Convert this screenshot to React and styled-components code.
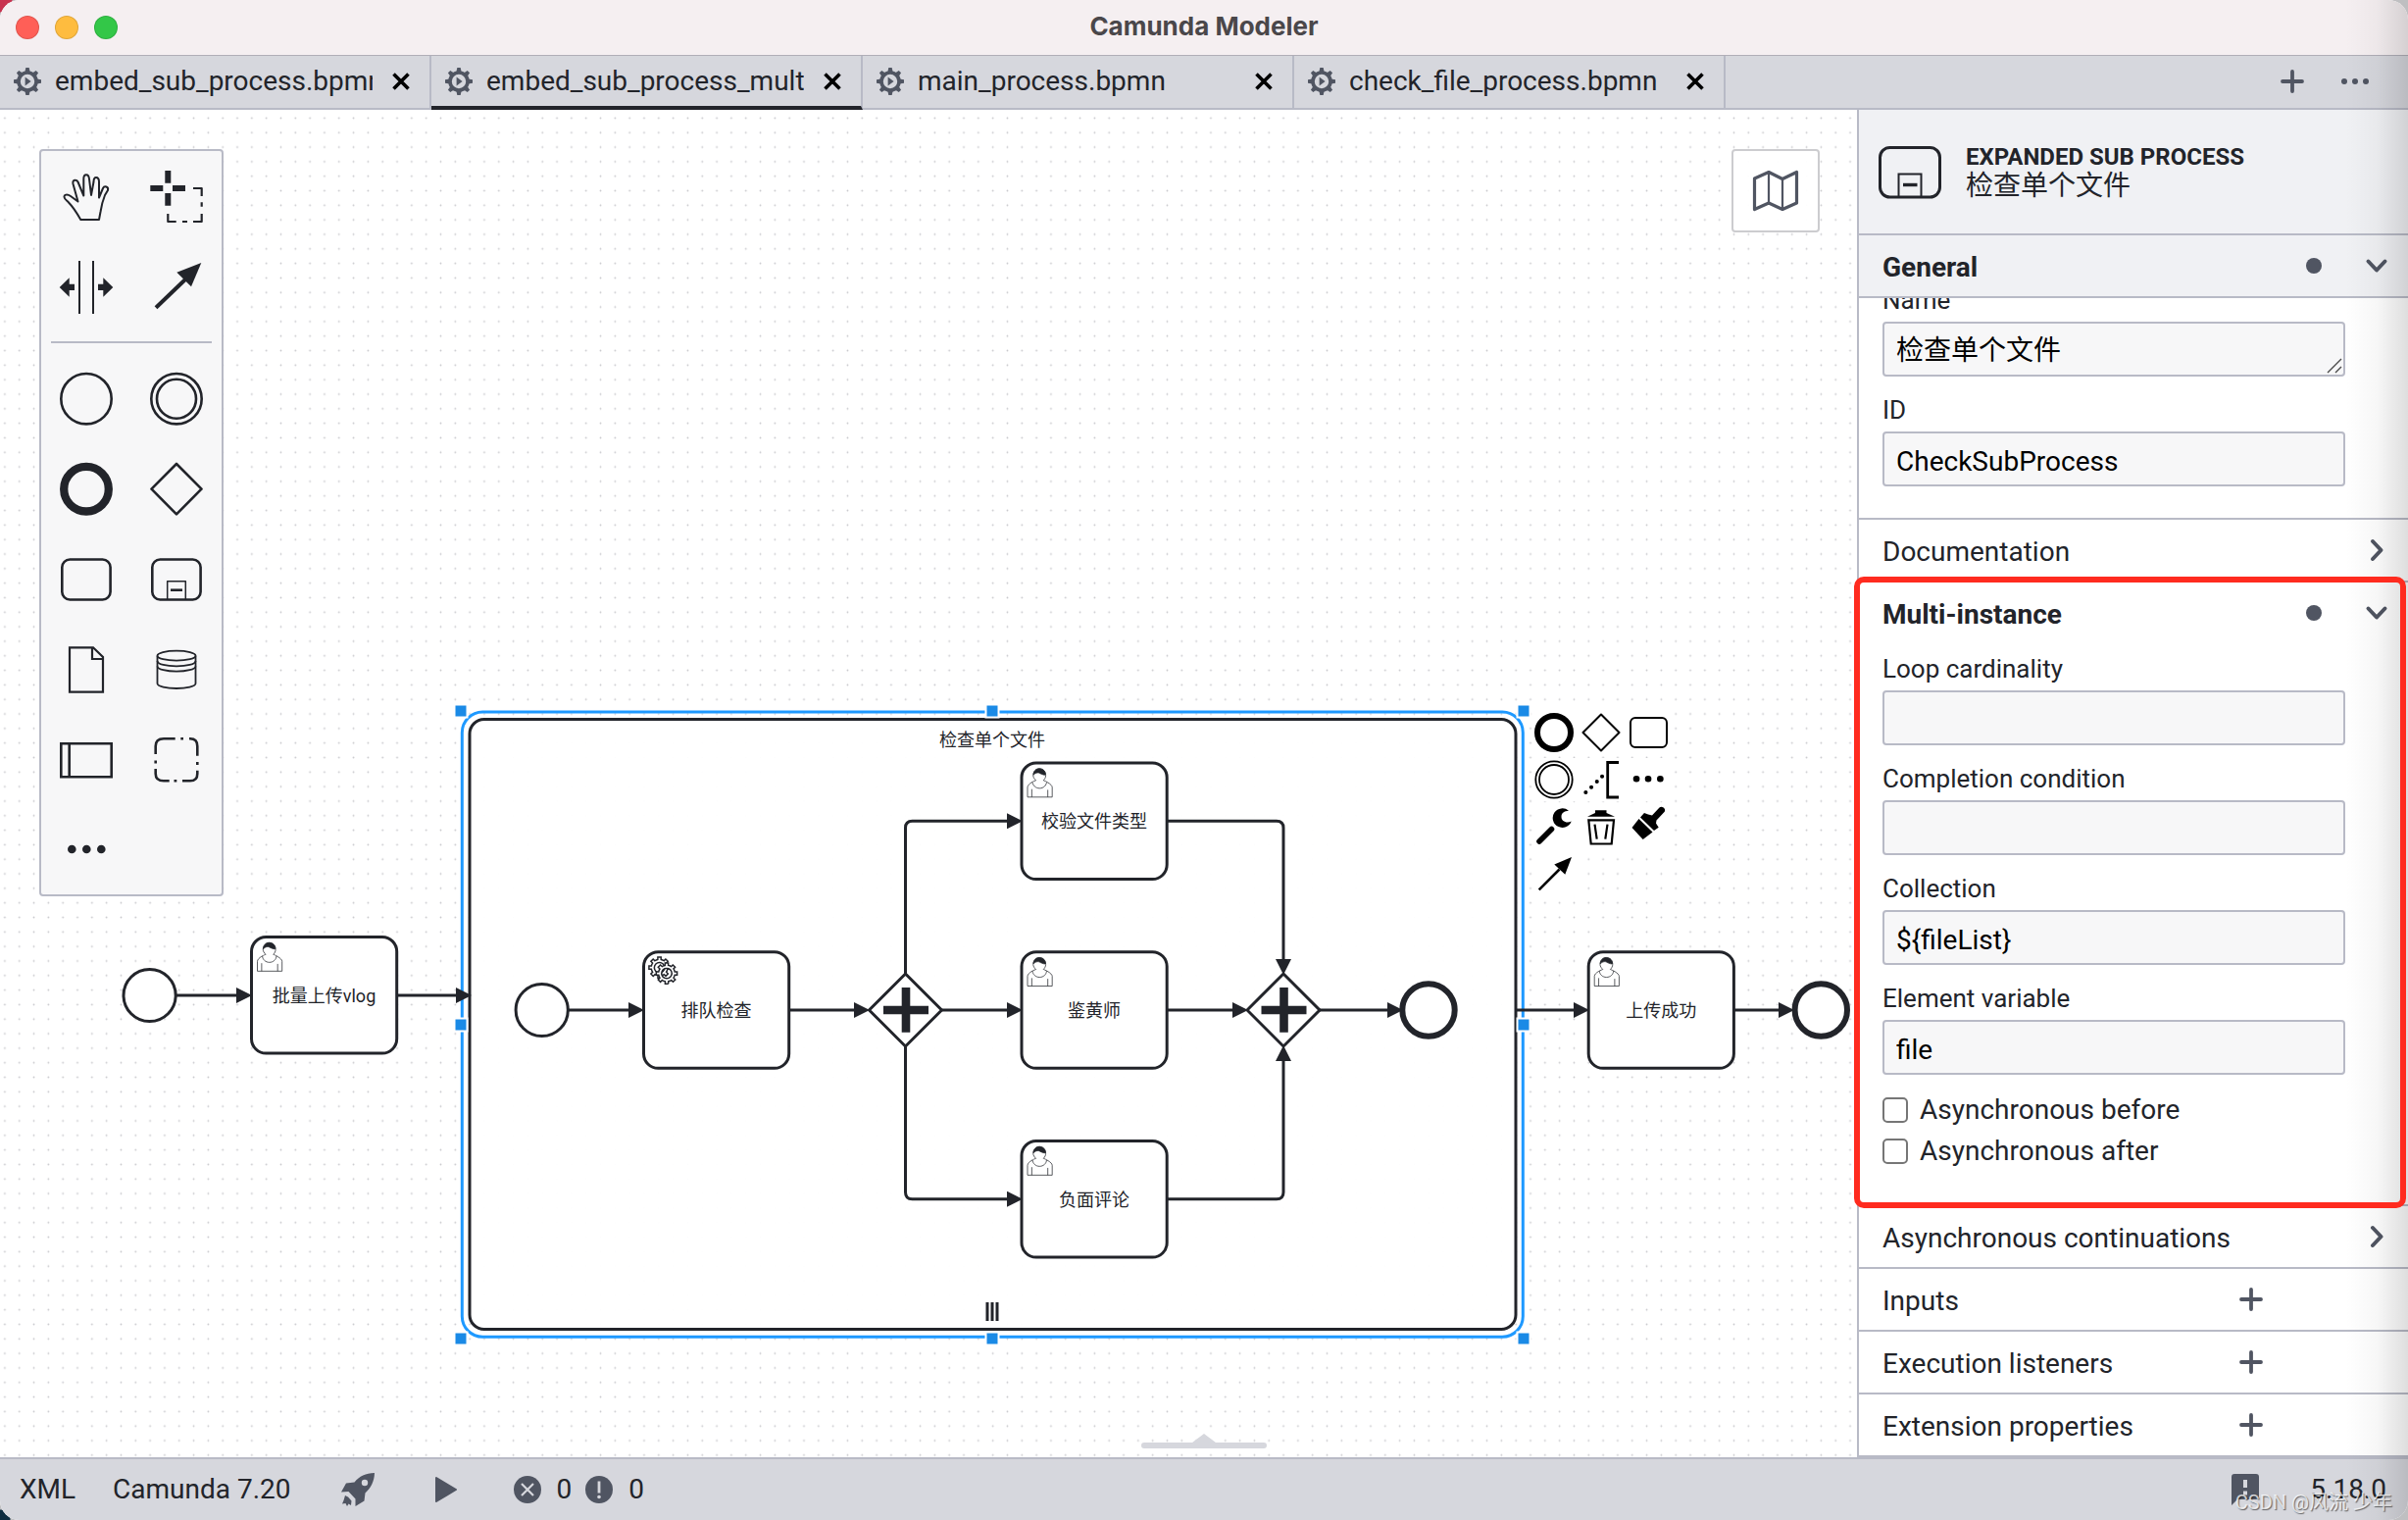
import { useState } from 'react';
import styled, { createGlobalStyle, css } from 'styled-components';

const GlobalStyle = createGlobalStyle`
  * {
    box-sizing: border-box;
  }

  body {
    margin: 0;
    background:
      radial-gradient(circle at 0 0, #c8324f 0 12px, transparent 13px),
      radial-gradient(circle at 0 100%, #0d2c40 0 10px, transparent 11px),
      #bfbfc1;
    color: #22242a;
    font-family: Roboto, 'Noto Sans CJK SC', sans-serif;
    font-size: 28px;
  }

  button,
  input,
  textarea {
    font-family: inherit;
    font-size: inherit;
    color: inherit;
  }
`;

const Window = styled.div`
  position: relative;
  display: flex;
  flex-direction: column;
  min-height: 100vh;
  border-radius: 20px;
  overflow: hidden;
  background: #fff;
`;

const EdgeShade = styled.div`
  position: absolute;
  top: 0;
  right: 0;
  bottom: 0;
  width: 64px;
  pointer-events: none;
  background: linear-gradient(to right, transparent, rgba(0, 0, 0, 0.03) 50%, rgba(0, 0, 0, 0.13));
`;

const TitleBar = styled.header`
  display: grid;
  grid-template-columns: 1fr auto 1fr;
  align-items: center;
  height: 57px;
  padding: 0 16px;
  background: #f5eff1;
  border-bottom: 1px solid #b0aeb7;
`;

const TrafficLights = styled.div`
  display: flex;
  gap: 16px;
`;

const Light = styled.button`
  width: 24px;
  height: 24px;
  padding: 0;
  border: 1px solid rgba(0, 0, 0, 0.12);
  border-radius: 50%;
  background: ${props => props.$color};
`;

const WindowTitle = styled.h1`
  margin: 0;
  padding-bottom: 2px;
  font-family: Inter, sans-serif;
  font-size: 26px;
  font-weight: 700;
  line-height: 32px;
  color: #4a474a;
`;

const TabBar = styled.nav`
  display: flex;
  height: 55px;
  background: #d6d7dd;
  border-bottom: 2px solid #b8bac6;
`;

const Tab = styled.div`
  display: flex;
  align-items: center;
  flex: 0 1 440px;
  min-width: 0;
  height: ${props => (props.$active ? '55px' : '53px')};
  padding: 0 20px ${props => (props.$active ? '0' : '2px')} 14px;
  border-right: 2px solid #b8bac6;
  border-bottom: ${props => (props.$active ? '4px solid #22242a' : 'none')};
`;

const TabName = styled.span`
  flex: 1;
  margin: 0 20px 0 14px;
  overflow: hidden;
  white-space: nowrap;
  line-height: 36px;
`;

const IconButton = styled.button`
  display: flex;
  align-items: center;
  justify-content: center;
  padding: 0;
  border: none;
  background: none;
  color: ${props => props.$color || '#505562'};
  cursor: pointer;
`;

const TabActions = styled.div`
  display: flex;
  align-items: center;
  gap: 38px;
  margin-left: auto;
  padding: 0 40px 2px 0;
`;

const Main = styled.main`
  position: relative;
  display: flex;
  flex: 1;
`;

const Canvas = styled.section`
  position: relative;
  flex: 1;
  min-width: 0;
  overflow: hidden;
`;

const DiagramSvg = styled.svg`
  position: absolute;
  inset: 0;
  width: 100%;
  height: 100%;

  text {
    font-size: 18px;
    text-anchor: middle;
    fill: #22242a;
  }
`;

const Palette = styled.div`
  position: absolute;
  top: 40px;
  left: 40px;
  display: grid;
  grid-template-columns: 92px 92px;
  background: #f7f7f8;
  border: 2px solid #b8bac6;
  border-radius: 4px;
`;

const PaletteEntry = styled.button`
  width: 92px;
  height: 92px;
  padding: 0;
  border: none;
  background: none;
  color: #22242a;
  cursor: pointer;

  svg {
    display: block;
  }
`;

const Separator = styled.hr`
  grid-column: 1 / -1;
  width: 164px;
  height: 2px;
  margin: 10px auto;
  border: none;
  background: #b8bac6;
`;

const ContextPad = styled.div`
  position: absolute;
  top: 613px;
  left: 1563px;
  display: grid;
  grid-template-columns: repeat(3, 44px);
  gap: 4px;
`;

const PadEntry = styled.button`
  width: 44px;
  height: 44px;
  padding: 0;
  border: none;
  background: #fff;
  color: #000;
  cursor: pointer;

  svg {
    display: block;
  }
`;

const MinimapToggle = styled.button`
  position: absolute;
  top: 40px;
  right: 38px;
  display: flex;
  align-items: center;
  justify-content: center;
  width: 90px;
  height: 85px;
  padding: 0;
  border: 2px solid #cccccf;
  border-radius: 4px;
  background: rgba(255, 255, 255, 0.95);
  color: #505562;
`;

const LogHandle = styled.svg`
  position: absolute;
  bottom: 8px;
  left: calc(50% - 64px);
`;

const Properties = styled.aside`
  flex: 0 0 562px;
  border-left: 2px solid #b8bac6;
  background: #fff;
`;

const PanelHeader = styled.div`
  display: flex;
  align-items: center;
  gap: 24px;
  height: 128px;
  padding: 2px 20px 0 20px;
  background: #f0f1f4;
  border-bottom: 2px solid #b8bac6;
`;

const ElementType = styled.div`
  font-size: 24px;
  font-weight: 700;
  line-height: 28px;
  text-transform: uppercase;
`;

const ElementName = styled.div`
  line-height: 32px;
`;

const Group = styled.section`
  position: relative;
  border-bottom: 2px solid #b8bac6;

  ${props => props.$marked && css`
    &::after {
      content: '';
      position: absolute;
      z-index: 1;
      inset: -6px 2px -4px -5px;
      border: 6px solid #ff2b1f;
      border-radius: 10px;
      pointer-events: none;
    }
  `}
`;

const GroupHeader = styled.div`
  display: flex;
  align-items: center;
  height: ${props => (props.$sticky ? '64px' : '62px')};
  padding: 0 20px 0 24px;
  background: ${props => (props.$sticky ? '#f0f1f4' : 'transparent')};
  border-bottom: ${props => (props.$sticky ? '2px solid #b8bac6' : 'none')};
`;

const GroupTitle = styled.h2`
  flex: 1;
  margin: 0;
  padding-top: 4px;
  font-size: 28px;
  font-weight: ${props => (props.$open ? 700 : 400)};
  line-height: 36px;
`;

const DataDot = styled.span`
  width: 16px;
  height: 16px;
  margin-right: 44px;
  border-radius: 50%;
  background: #505562;
`;

const AddSlot = styled.div`
  margin-right: 128px;
`;

const GroupBody = styled.div`
  overflow: hidden;
  padding: 0 64px 32px 24px;
`;

const Fields = styled.div`
  display: flex;
  flex-direction: column;
  gap: 18px;
  margin-top: ${props => (props.$scrolled ? '-14px' : '10px')};
`;

const Field = styled.div`
  position: relative;
  display: flex;
  flex-direction: column;
  gap: 6px;
`;

const FieldLabel = styled.label`
  font-size: 26px;
  line-height: 32px;
`;

const boxStyle = css`
  display: block;
  width: 100%;
  height: 56px;
  padding: 10px 12px 6px;
  border: 2px solid #b8bac6;
  border-radius: 4px;
  background: #f7f7f8;
  color: #000;
  line-height: 36px;
  outline: none;
`;

const TextInput = styled.input`
  ${boxStyle}
`;

const TextArea = styled.textarea`
  ${boxStyle}
  overflow: hidden;
  resize: vertical;

  &::-webkit-resizer {
    background: transparent;
  }
`;

const Grip = styled.svg`
  position: absolute;
  right: 3px;
  bottom: 3px;
  pointer-events: none;
`;

const CheckList = styled.div`
  margin-top: 15px;
  padding-bottom: 1px;
`;

const CheckRow = styled.div`
  display: flex;
  align-items: center;
  gap: 12px;
  height: 42px;
`;

const Checkbox = styled.input`
  appearance: none;
  width: 26px;
  height: 26px;
  margin: 0;
  border: 2px solid #767676;
  border-radius: 5px;
  background: #fff;
`;

const CheckLabel = styled.label`
  line-height: 36px;
`;

const StatusBar = styled.footer`
  display: flex;
  align-items: center;
  height: 64px;
  padding: 0 20px;
  background: #d6d7dd;
  border-top: 2px solid #b8bac6;
`;

const StatusButton = styled.button`
  display: flex;
  align-items: center;
  gap: 16px;
  margin-right: ${props => props.$gap}px;
  padding: 0;
  border: none;
  background: none;
  line-height: 36px;
  cursor: pointer;

  svg {
    color: #505562;
  }
`;

const StatusRight = styled.div`
  display: flex;
  align-items: center;
  margin-left: auto;
`;

const Watermark = styled.span`
  position: absolute;
  right: 16px;
  bottom: 6px;
  font-size: 20px;
  line-height: 24px;
  color: rgba(255, 255, 255, 0.75);
  text-shadow: 1px 1px 1px rgba(0, 0, 0, 0.55);
  white-space: nowrap;
`;

const INK = '#22242a';

const TEETH = [0, 45, 90, 135, 180, 225, 270, 315];

const GearIcon = () => (
  <svg width="28" height="28" viewBox="-14 -14 28 28" fill="#505562">
    <circle r="9" fill="none" stroke="#505562" strokeWidth="3.6" />
    {TEETH.map(angle => (
      <path key={angle} d="M-2.6 -9.5L-1.7 -14H1.7L2.6 -9.5Z" transform={`rotate(${angle})`} />
    ))}
    <path d="M-2.4 -4.6L3.6 0L-2.4 4.6Z" />
  </svg>
);

const CloseIcon = () => (
  <svg width="18" height="18" viewBox="-9 -9 18 18" stroke="currentColor" strokeWidth="3.6">
    <path d="M-7.5 -7.5L7.5 7.5M7.5 -7.5L-7.5 7.5" />
  </svg>
);

const PlusIcon = () => (
  <svg width="24" height="24" viewBox="-12 -12 24 24" stroke="currentColor" strokeWidth="3.8" strokeLinecap="round">
    <path d="M-10 0H10M0 -10V10" />
  </svg>
);

const DotsIcon = () => (
  <svg width="28" height="8" viewBox="-14 -4 28 8" fill="currentColor">
    <circle cx="-11" r="3" />
    <circle cx="0" r="3" />
    <circle cx="11" r="3" />
  </svg>
);

const Chevron = ({ open }) => (
  <svg width="24" height="24" viewBox="-12 -12 24 24" fill="none" stroke="currentColor" strokeWidth="4" strokeLinecap="round" strokeLinejoin="round">
    <path d={open ? 'M-8.5 -4.5L0 4.5L8.5 -4.5' : 'M-4 -9L4.5 0L-4 9'} />
  </svg>
);

const SubProcessIcon = () => (
  <svg width="65" height="54" viewBox="0 0 65 54" fill="none" stroke={INK}>
    <rect x="1.5" y="1.5" width="61" height="50.5" rx="10" strokeWidth="3" />
    <path d="M20.5 52V28.5H43.5V52" strokeWidth="2" />
    <path d="M25 39.5H39.5" strokeWidth="3.4" />
  </svg>
);

const MapIcon = () => (
  <svg width="48" height="44" viewBox="-24 -22 48 44" fill="none" stroke="currentColor" strokeWidth="3.2" strokeLinejoin="round">
    <path d="M-21.5 -13L-7 -19.5L7 -12.5L21.5 -19.5V12L7 18.5L-7 12L-21.5 18.5Z" />
    <path d="M-7 -19V12M7 -12.5V18.5" strokeWidth="2.2" />
  </svg>
);

const RocketIcon = () => (
  <svg width="36" height="36" viewBox="0 0 36 36" fill="currentColor">
    <path fillRule="evenodd" d="M35 1C26 1 19.5 4.5 14.5 10.5L6 11.5L1 20.5L8.5 20L15.5 27.5L15.5 35L24.500 29.5L25.5 21.5C31 16.5 34.8 10 35 1ZM25 7.8A3.2 3.2 0 1 1 25 14.2A3.2 3.2 0 1 1 25 7.8Z" />
    <path d="M5 24L8 25.5L11.5 29.5L11 34L8.5 32.5L7 35L5.5 32L2 32.5L3.5 29Z" />
  </svg>
);

const PlayIcon = () => (
  <svg width="24" height="28" viewBox="0 0 24 28" fill="currentColor" stroke="currentColor" strokeWidth="2" strokeLinejoin="round">
    <path d="M2 2L22 14L2 26Z" />
  </svg>
);

const ErrorIcon = () => (
  <svg width="28" height="28" viewBox="-14 -14 28 28">
    <circle r="14" fill="currentColor" />
    <path d="M-6 -6L6 6M6 -6L-6 6" stroke="#d6d7dd" strokeWidth="2.2" />
  </svg>
);

const WarningIcon = () => (
  <svg width="28" height="28" viewBox="-14 -14 28 28">
    <circle r="14" fill="currentColor" />
    <path d="M0 -8.5V3.5" stroke="#d6d7dd" strokeWidth="2.8" />
    <circle cy="7.5" r="1.8" fill="#d6d7dd" />
  </svg>
);

const FeedbackIcon = () => (
  <svg width="28" height="32" viewBox="0 0 28 32">
    <path d="M3 0H25A3 3 0 0 1 28 3V23A3 3 0 0 1 25 26H6L0 32V3A3 3 0 0 1 3 0Z" fill="currentColor" />
    <path d="M14 6V14M14 17.5V21.5" stroke="#d6d7dd" strokeWidth="4" />
  </svg>
);

const PALETTE = [
  { name: 'Hand tool', icon: <path strokeWidth="2" d="M-5.7 24H13L14.5 16C15.5 9 17 4 19 -1L22 -6C23 -9.5 18.5 -11 17 -8L13 1.5V-14.5C13 -17.5 12.5 -19 10 -19C8 -19 7.5 -16.5 7.5 -14.5L5 -1L3 -17.5C2.7 -20.5 1.5 -21.8 0 -21.8C-1.5 -21.8 -2.7 -20.5 -2.7 -17.5V-.5L-8.5 -14.5C-9.7 -17 -14.5 -17.5 -13.5 -12.5L-8.5 5.5L-16 0C-19 -2 -23 -2 -22.5 1C-22.3 3 -20 4.5 -18 6.5C-13 11.5 -10 16.5 -5.7 24Z" /> },
  {
    name: 'Lasso tool',
    icon: (
      <>
        <path strokeWidth="6" d="M-8.7 -26V-13.3M-8.7 -3V9.7M-26.7 -8H-13.7M-4 -8H9" />
        <path strokeWidth="2.2" d="M17 -8H25.7V0M25.7 6.3V10.7M25.7 18V26H17M11 26H6M-.3 26H-8.7V18" />
      </>
    ),
  },
  {
    name: 'Space tool',
    icon: (
      <>
        <path strokeWidth="2" d="M-7 -26V28M7 -26V28" />
        <path stroke="none" fill="currentColor" d="M-27.3 1L-17.3 -8.7V-2.3H-12V4H-17.3V10.7ZM27.3 1L17.3 -8.7V-2.3H12V4H17.3V10.7Z" />
      </>
    ),
  },
  {
    name: 'Connect tool',
    icon: (
      <>
        <path strokeWidth="4" d="M-21 21.7L9 -7" />
        <path stroke="none" fill="currentColor" d="M25.3 -24L.3 -14.3L15 .3Z" />
      </>
    ),
  },
  null,
  { name: 'Start event', icon: <circle r="25.7" cy=".7" /> },
  {
    name: 'Intermediate event',
    icon: (
      <>
        <circle r="25.7" cy=".7" />
        <circle r="20" cy=".7" />
      </>
    ),
  },
  { name: 'End event', icon: <circle r="22.8" cy=".7" strokeWidth="8.3" /> },
  { name: 'Gateway', icon: <path d="M0 -25L25.5 .7L0 26.3L-25.5 .7Z" /> },
  { name: 'Task', icon: <rect x="-24.7" y="-19.5" width="49.3" height="41" rx="8" /> },
  {
    name: 'Expanded sub-process',
    icon: (
      <>
        <rect x="-24.7" y="-19.5" width="49.3" height="41" rx="8" />
        <path strokeWidth="1.5" d="M-9.3 21V2.8H9.3V21" />
        <path d="M-6 11.7H6" />
      </>
    ),
  },
  { name: 'Data object', icon: <path strokeWidth="2.2" strokeLinejoin="miter" d="M-17 -21.7H7L17 -12V23.7H-17ZM6 -21.7V-10H17" /> },
  {
    name: 'Data store',
    icon: (
      <g strokeWidth="1.8">
        <ellipse cy="-13.3" rx="19.5" ry="5" />
        <path d="M-19.5 -13.3V15C-19.5 18 -10 20 0 20S19.5 18 19.5 15V-13.3" />
        <path d="M-19.5 -8C-19.5 -4.5 -10 -2.7 0 -2.7S19.5 -4.5 19.5 -8M-19.5 -2.5C-19.5 .5 -10 2.7 0 2.7S19.5 .5 19.5 -2.5" />
      </g>
    ),
  },
  { name: 'Participant', icon: <path strokeLinejoin="miter" d="M-25.7 -15.7H25.7V18.3H-25.7ZM-17.3 -15.7V18.3" /> },
  {
    name: 'Group',
    icon: (
      <path d="M-21.3 -5V-13Q-21.3 -20.7 -13 -20.7H-1.3M4.3 -20.7H7M13 -20.7H14Q21.3 -20.7 21.3 -13V-3.3M21.3 3V6M21.3 11.7V15Q21.3 22.3 14 22.3H6M.3 22.3H-2.5M-7.3 22.3H-13Q-21.3 22.3 -21.3 15V10M-21.3 1.5V4.5" />
    ),
  },
  {
    name: 'Create element',
    icon: (
      <g stroke="none" fill="currentColor">
        <circle cx="-14.7" r="4.3" />
        <circle cx=".3" r="4.3" />
        <circle cx="15.3" r="4.3" />
      </g>
    ),
  },
];

const PAD = [
  { name: 'Append end event', icon: <circle r="17" strokeWidth="6" /> },
  { name: 'Append gateway', icon: <path d="M0 -18.5L18.5 0L0 18.5L-18.5 0Z" /> },
  { name: 'Append task', icon: <rect x="-18" y="-15" width="37" height="30" rx="5" /> },
  {
    name: 'Append intermediate event',
    icon: (
      <>
        <circle r="18.7" strokeWidth="1.8" />
        <circle r="15" strokeWidth="1.8" />
      </>
    ),
  },
  {
    name: 'Add text annotation',
    icon: (
      <>
        <path strokeWidth="2.8" strokeLinejoin="miter" d="M18 -17.5H6.7V18H18" />
        <path strokeWidth="4" strokeLinecap="round" d="M-15.7 13h.1M-10 7.7h.1M-4.3 2h.1M1 -3.3h.1" />
      </>
    ),
  },
  { name: 'Append element', icon: <path strokeWidth="6.6" strokeLinecap="round" d="M-12 -.7h.1M0 -.7h.1M12.3 -.7h.1" /> },
  {
    name: 'Change element',
    icon: (
      <>
        <path strokeWidth="5.6" strokeLinecap="round" d="M-15 15L-2.5 2.5" />
        <path stroke="none" fill="currentColor" d="M15 -16.2A9.8 9.8 0 1 0 17.7 -5.5C13 -3 7.5 -5.5 7.5 -10C7.5 -14 10.5 -16 15 -16.2Z" />
      </>
    ),
  },
  {
    name: 'Delete',
    icon: (
      <>
        <path stroke="none" fill="currentColor" d="M-14 -10.3L-6 -14V-16.7H5.5V-14L14 -10.3Z" />
        <path strokeWidth="2.2" strokeLinejoin="miter" d="M-12.7 -6.7H13L10.7 17.5H-10.3ZM-6.5 -2.3L-4.3 12.7M6.5 -2.3L4.3 12.7" />
      </>
    ),
  },
  {
    name: 'Set color',
    icon: (
      <g stroke="none" fill="currentColor">
        <path d="M-9.5 -8L4.5 5.5L-5.3 13L-16.5 1Z" />
        <path d="M-8 -9.5L-4 -14L0 -12.5L4 -11.5L11.5 -19.5C14 -22 19 -18 16.5 -15L8.5 -6.5L8 -3.5L10.7 .7L6 4Z" />
      </g>
    ),
  },
  {
    name: 'Connect',
    icon: (
      <>
        <path strokeWidth="2.6" d="M-15.3 16.3L5.5 -4.5" />
        <path stroke="none" fill="currentColor" d="M18 -17L.3 -9.5L11.3 .7Z" />
      </>
    ),
  },
];

const GEAR_PATH = 'v -1.71335 c 0.352326,-0.0705 0.703932,-0.17838 1.047628,-0.32133 0.344416,-0.14465 0.665822,-0.32133 0.966377,-0.52145 l 1.19431,1.18005 1.567487,-1.57688 -1.195028,-1.18014 c 0.403376,-0.61394 0.683079,-1.29908 0.825447,-2.01824 l 1.622133,-0.01 v -2.2196 l -1.636514,0.01 c -0.07333,-0.35153 -0.178319,-0.70024 -0.323564,-1.04372 -0.145244,-0.34406 -0.321407,-0.6644 -0.522735,-0.96217 l 1.131035,-1.13631 -1.583305,-1.56293 -1.129598,1.13589 c -0.614052,-0.40108 -1.302883,-0.68093 -2.022633,-0.82247 l 0.0093,-1.61852 h -2.241173 l 0.0042,1.63124 c -0.353763,0.0736 -0.705369,0.17977 -1.049785,0.32371 -0.344415,0.14437 -0.665102,0.32092 -0.9635006,0.52046 l -1.1698628,-1.15823 -1.5667691,1.5792 1.1684265,1.15669 c -0.4026573,0.61283 -0.68308,1.29797 -0.8247287,2.01713 l -1.6588041,0.003 v 2.22174 l 1.6724648,-0.006 c 0.073327,0.35077 0.1797598,0.70243 0.3242851,1.04472 0.1452428,0.34448 0.3214064,0.6644 0.5227339,0.96066 l -1.1993431,1.19723 1.5840256,1.56011 1.1964668,-1.19348 c 0.6140517,0.40346 1.3028827,0.68232 2.0233517,0.82331 l 7.19e-4,1.69892 h 2.226848 z m 0.221462,-3.9957 c -1.788948,0.7502 -3.8576,-0.0928 -4.6097055,-1.87438 -0.7521065,-1.78321 0.090598,-3.84627 1.8802645,-4.59604 1.78823,-0.74936 3.856881,0.0929 4.608987,1.87437 0.752106,1.78165 -0.0906,3.84612 -1.879546,4.59605 z';

const UserMarker = () => (
  <g stroke={INK} strokeWidth=".5" fill="#fff">
    <path d="m 15,12 c 0.909,-0.845 1.594,-2.049 1.594,-3.385 0,-2.554 -1.805,-4.622 -4.357,-4.622 -2.552,0 -4.288,2.068 -4.288,4.622 0,1.348 0.974,2.562 1.896,3.405 -0.529,0.187 -5.669,2.097 -5.794,4.756 v 6.718 h 17 v -6.718 c 0,-2.298 -5.528,-4.595 -6.051,-4.776 z m -8,6 l 0,5.5 m 11,0 l 0,-5" />
    <path d="m 17.162,13.009 c 0,2.447 -2.158,4.431 -4.821,4.431 -2.665,0 -4.822,-1.981 -4.822,-4.431" />
    <path fill={INK} d="m 8.1,8.2 c 0,0 2.251,-2.358 4.274,-1.177 2.024,1.181 4.221,1.537 4.124,0.965 -0.098,-0.57 -0.117,-3.791 -4.191,-4.136 -3.572,0.001 -4.208,3.42 -4.207,4.348 z" />
  </g>
);

const ServiceMarker = () => (
  <g stroke={INK} strokeWidth="1" fill="#fff">
    <path d={`m 12,18 ${GEAR_PATH}`} />
    <path d={`m 17,22 ${GEAR_PATH}`} />
  </g>
);

const TASKS = [
  { label: '批量上传vlog', x: 256.5, y: 955.5, type: 'user' },
  { label: '排队检查', x: 656.5, y: 970.7, type: 'service' },
  { label: '校验文件类型', x: 1042, y: 778, type: 'user' },
  { label: '鉴黄师', x: 1042, y: 970.7, type: 'user' },
  { label: '负面评论', x: 1042, y: 1163.5, type: 'user' },
  { label: '上传成功', x: 1620.2, y: 970.7, type: 'user' },
];

const FLOWS = [
  'M180 1015H250',
  'M580 1030H650',
  'M805 1030H880',
  'M923.5 993V844.3Q923.5 837.3 930.5 837.3H1036',
  'M960.5 1030H1036',
  'M923.5 1067V1215.7Q923.5 1222.7 930.5 1222.7H1036',
  'M1190.5 837.3H1302Q1309 837.3 1309 844.3V987',
  'M1190.5 1030H1266',
  'M1190.5 1222.7H1302Q1309 1222.7 1309 1215.7V1073',
  'M1346 1030H1424',
];

const OUTER_FLOWS = ['M405 1015H474', 'M1546 1030H1614', 'M1769 1030H1823'];

const HANDLES = [
  [470, 725], [1012, 725], [1554, 725],
  [470, 1045], [1554, 1045],
  [470, 1365], [1012, 1365], [1554, 1365],
];

const Task = ({ task }) => (
  <g>
    <rect x={task.x} y={task.y} width="148.2" height="118.6" rx="14.8" fill="#fff" stroke={INK} strokeWidth="3" />
    <g transform={`translate(${task.x} ${task.y}) scale(1.482)`}>
      {task.type === 'user' ? <UserMarker /> : <ServiceMarker />}
    </g>
    <text x={task.x + 74} y={task.y + 66}>{task.label}</text>
  </g>
);

const Gateway = ({ x, y }) => (
  <g transform={`translate(${x} ${y})`}>
    <path d="M0 -37L37 0L0 37L-37 0Z" fill="#fff" stroke={INK} strokeWidth="3" />
    <path d="M-22.5 0H23.5M.5 -23V22.7" stroke={INK} strokeWidth="8.6" />
  </g>
);

const Diagram = () => (
  <DiagramSvg role="img" aria-label="BPMN diagram">
    <defs>
      <pattern id="grid" x="-2.5" y="1" width="14.82" height="14.82" patternUnits="userSpaceOnUse">
        <circle cx="7.41" cy="7.41" r=".9" fill="#c8c8cc" />
      </pattern>
      <marker id="arrow" viewBox="0 0 16 16" refX="9" refY="8" markerWidth="16" markerHeight="16" markerUnits="userSpaceOnUse" orient="auto">
        <path d="M0 0L16 8L0 16Z" fill={INK} />
      </marker>
    </defs>
    <rect width="100%" height="100%" fill="url(#grid)" />
    <g transform="translate(0 -112)" fill="none" stroke={INK} strokeWidth="3">
      <rect x="479" y="733.5" width="1067" height="622" rx="14.8" fill="#fff" fillOpacity=".96" />
      {FLOWS.map(d => <path key={d} d={d} markerEnd="url(#arrow)" />)}
      <circle cx="152.6" cy="1015" r="26.6" fill="#fff" />
      <circle cx="552.7" cy="1030" r="26.6" fill="#fff" />
      <circle cx="1457" cy="1030" r="26.7" strokeWidth="6" fill="#fff" />
      <circle cx="1857.3" cy="1030" r="26.7" strokeWidth="6" fill="#fff" />
      <path d="M1007 1328V1347M1012 1328V1347M1017 1328V1347" />
      <rect x="471.3" y="726" width="1082" height="637.3" rx="21" stroke="#1e99ff" />
      {OUTER_FLOWS.map(d => <path key={d} d={d} markerEnd="url(#arrow)" />)}
      <g stroke="none">
        <Gateway x={923.5} y={1030} />
        <Gateway x={1309} y={1030} />
        {TASKS.map(task => <Task key={task.label} task={task} />)}
        <text x="1012" y="761">检查单个文件</text>
      </g>
      {HANDLES.map(([x, y]) => (
        <rect key={`${x}-${y}`} x={x - 6.5} y={y - 6.5} width="13" height="13" fill="#1a8ae6" stroke="#fff" strokeWidth="2" />
      ))}
    </g>
  </DiagramSvg>
);

const TABS = [
  'embed_sub_process.bpmn',
  'embed_sub_process_multi.bpmn',
  'main_process.bpmn',
  'check_file_process.bpmn',
];

const App = () => {
  const [activeTab, setActiveTab] = useState(TABS[1]);
  const [values, setValues] = useState({
    name: '检查单个文件',
    id: 'CheckSubProcess',
    loopCardinality: '',
    completionCondition: '',
    collection: '${fileList}',
    elementVariable: 'file',
  });

  const handleChange = (e) => {
    setValues({ ...values, [e.target.id]: e.target.value });
  };

  const multiInstanceFields = [
    { id: 'loopCardinality', label: 'Loop cardinality' },
    { id: 'completionCondition', label: 'Completion condition' },
    { id: 'collection', label: 'Collection' },
    { id: 'elementVariable', label: 'Element variable' },
  ];

  return (
    <>
      <GlobalStyle />
      <Window>
        <TitleBar>
          <TrafficLights>
            <Light $color="#ff5f57" aria-label="Close" />
            <Light $color="#febc3f" aria-label="Minimize" />
            <Light $color="#33c748" aria-label="Zoom" />
          </TrafficLights>
          <WindowTitle>Camunda Modeler</WindowTitle>
        </TitleBar>

        <TabBar>
          {TABS.map(tab => (
            <Tab key={tab} $active={tab === activeTab} onClick={() => setActiveTab(tab)}>
              <GearIcon />
              <TabName>{tab}</TabName>
              <IconButton $color="#000" aria-label="Close tab"><CloseIcon /></IconButton>
            </Tab>
          ))}
          <TabActions>
            <IconButton aria-label="New tab"><PlusIcon /></IconButton>
            <IconButton aria-label="More tabs"><DotsIcon /></IconButton>
          </TabActions>
        </TabBar>

        <Main>
          <Canvas>
            <Diagram />
            <Palette>
              {PALETTE.map(entry => (entry ? (
                <PaletteEntry key={entry.name} aria-label={entry.name}>
                  <svg width="92" height="92" viewBox="-46 -46 92 92" fill="none" stroke="currentColor" strokeWidth="2.6" strokeLinejoin="round">
                    {entry.icon}
                  </svg>
                </PaletteEntry>
              ) : (
                <Separator key="separator" />
              )))}
            </Palette>
            <ContextPad>
              {PAD.map(entry => (
                <PadEntry key={entry.name} aria-label={entry.name}>
                  <svg width="44" height="44" viewBox="-22 -22 44 44" fill="none" stroke="currentColor" strokeWidth="2" strokeLinejoin="round">
                    {entry.icon}
                  </svg>
                </PadEntry>
              ))}
            </ContextPad>
            <MinimapToggle aria-label="Toggle minimap"><MapIcon /></MinimapToggle>
          </Canvas>

          <Properties>
            <PanelHeader>
              <SubProcessIcon />
              <div>
                <ElementType>Expanded sub process</ElementType>
                <ElementName>{values.name}</ElementName>
              </div>
            </PanelHeader>

            <Group>
              <GroupHeader $sticky>
                <GroupTitle $open>General</GroupTitle>
                <DataDot />
                <IconButton aria-label="Collapse General"><Chevron open /></IconButton>
              </GroupHeader>
              <GroupBody>
                <Fields $scrolled>
                  <Field>
                    <FieldLabel htmlFor="name">Name</FieldLabel>
                    <TextArea id="name" rows="1" value={values.name} onChange={handleChange} />
                    <Grip width="16" height="16" viewBox="0 0 16 16" stroke="#4a4a4a" strokeWidth="1.4">
                      <path d="M1 15L15 1M9 15L15 9" />
                    </Grip>
                  </Field>
                  <Field>
                    <FieldLabel htmlFor="id">ID</FieldLabel>
                    <TextInput id="id" value={values.id} onChange={handleChange} />
                  </Field>
                </Fields>
              </GroupBody>
            </Group>

            <Group>
              <GroupHeader>
                <GroupTitle>Documentation</GroupTitle>
                <IconButton aria-label="Expand Documentation"><Chevron /></IconButton>
              </GroupHeader>
            </Group>

            <Group $marked>
              <GroupHeader>
                <GroupTitle $open>Multi-instance</GroupTitle>
                <DataDot />
                <IconButton aria-label="Collapse Multi-instance"><Chevron open /></IconButton>
              </GroupHeader>
              <GroupBody>
                <Fields>
                  {multiInstanceFields.map(field => (
                    <Field key={field.id}>
                      <FieldLabel htmlFor={field.id}>{field.label}</FieldLabel>
                      <TextInput id={field.id} value={values[field.id]} onChange={handleChange} />
                    </Field>
                  ))}
                </Fields>
                <CheckList>
                  <CheckRow>
                    <Checkbox type="checkbox" id="asyncBefore" />
                    <CheckLabel htmlFor="asyncBefore">Asynchronous before</CheckLabel>
                  </CheckRow>
                  <CheckRow>
                    <Checkbox type="checkbox" id="asyncAfter" />
                    <CheckLabel htmlFor="asyncAfter">Asynchronous after</CheckLabel>
                  </CheckRow>
                </CheckList>
              </GroupBody>
            </Group>

            <Group>
              <GroupHeader>
                <GroupTitle>Asynchronous continuations</GroupTitle>
                <IconButton aria-label="Expand Asynchronous continuations"><Chevron /></IconButton>
              </GroupHeader>
            </Group>

            {['Inputs', 'Execution listeners', 'Extension properties'].map(title => (
              <Group key={title}>
                <GroupHeader>
                  <GroupTitle>{title}</GroupTitle>
                  <AddSlot>
                    <IconButton aria-label={`Add to ${title}`}><PlusIcon /></IconButton>
                  </AddSlot>
                </GroupHeader>
              </Group>
            ))}
          </Properties>

          <LogHandle width="128" height="16" viewBox="0 0 128 16" fill="#d6d7dd">
            <path d="M3 9H52L64 0L76 9H125A3 3 0 0 1 125 15H3A3 3 0 0 1 3 9Z" />
          </LogHandle>
        </Main>

        <StatusBar>
          <StatusButton $gap={38}>XML</StatusButton>
          <StatusButton $gap={50}>Camunda 7.20</StatusButton>
          <StatusButton $gap={60} aria-label="Deploy"><RocketIcon /></StatusButton>
          <StatusButton $gap={57} aria-label="Run"><PlayIcon /></StatusButton>
          <StatusButton $gap={14}><ErrorIcon />0</StatusButton>
          <StatusButton $gap={0}><WarningIcon />0</StatusButton>
          <StatusRight>
            <StatusButton $gap={52} aria-label="Feedback"><FeedbackIcon /></StatusButton>
            <StatusButton $gap={2}>5.18.0</StatusButton>
          </StatusRight>
        </StatusBar>
        <Watermark>CSDN @风流 少年</Watermark>
        <EdgeShade />
      </Window>
    </>
  );
};

export default App;
